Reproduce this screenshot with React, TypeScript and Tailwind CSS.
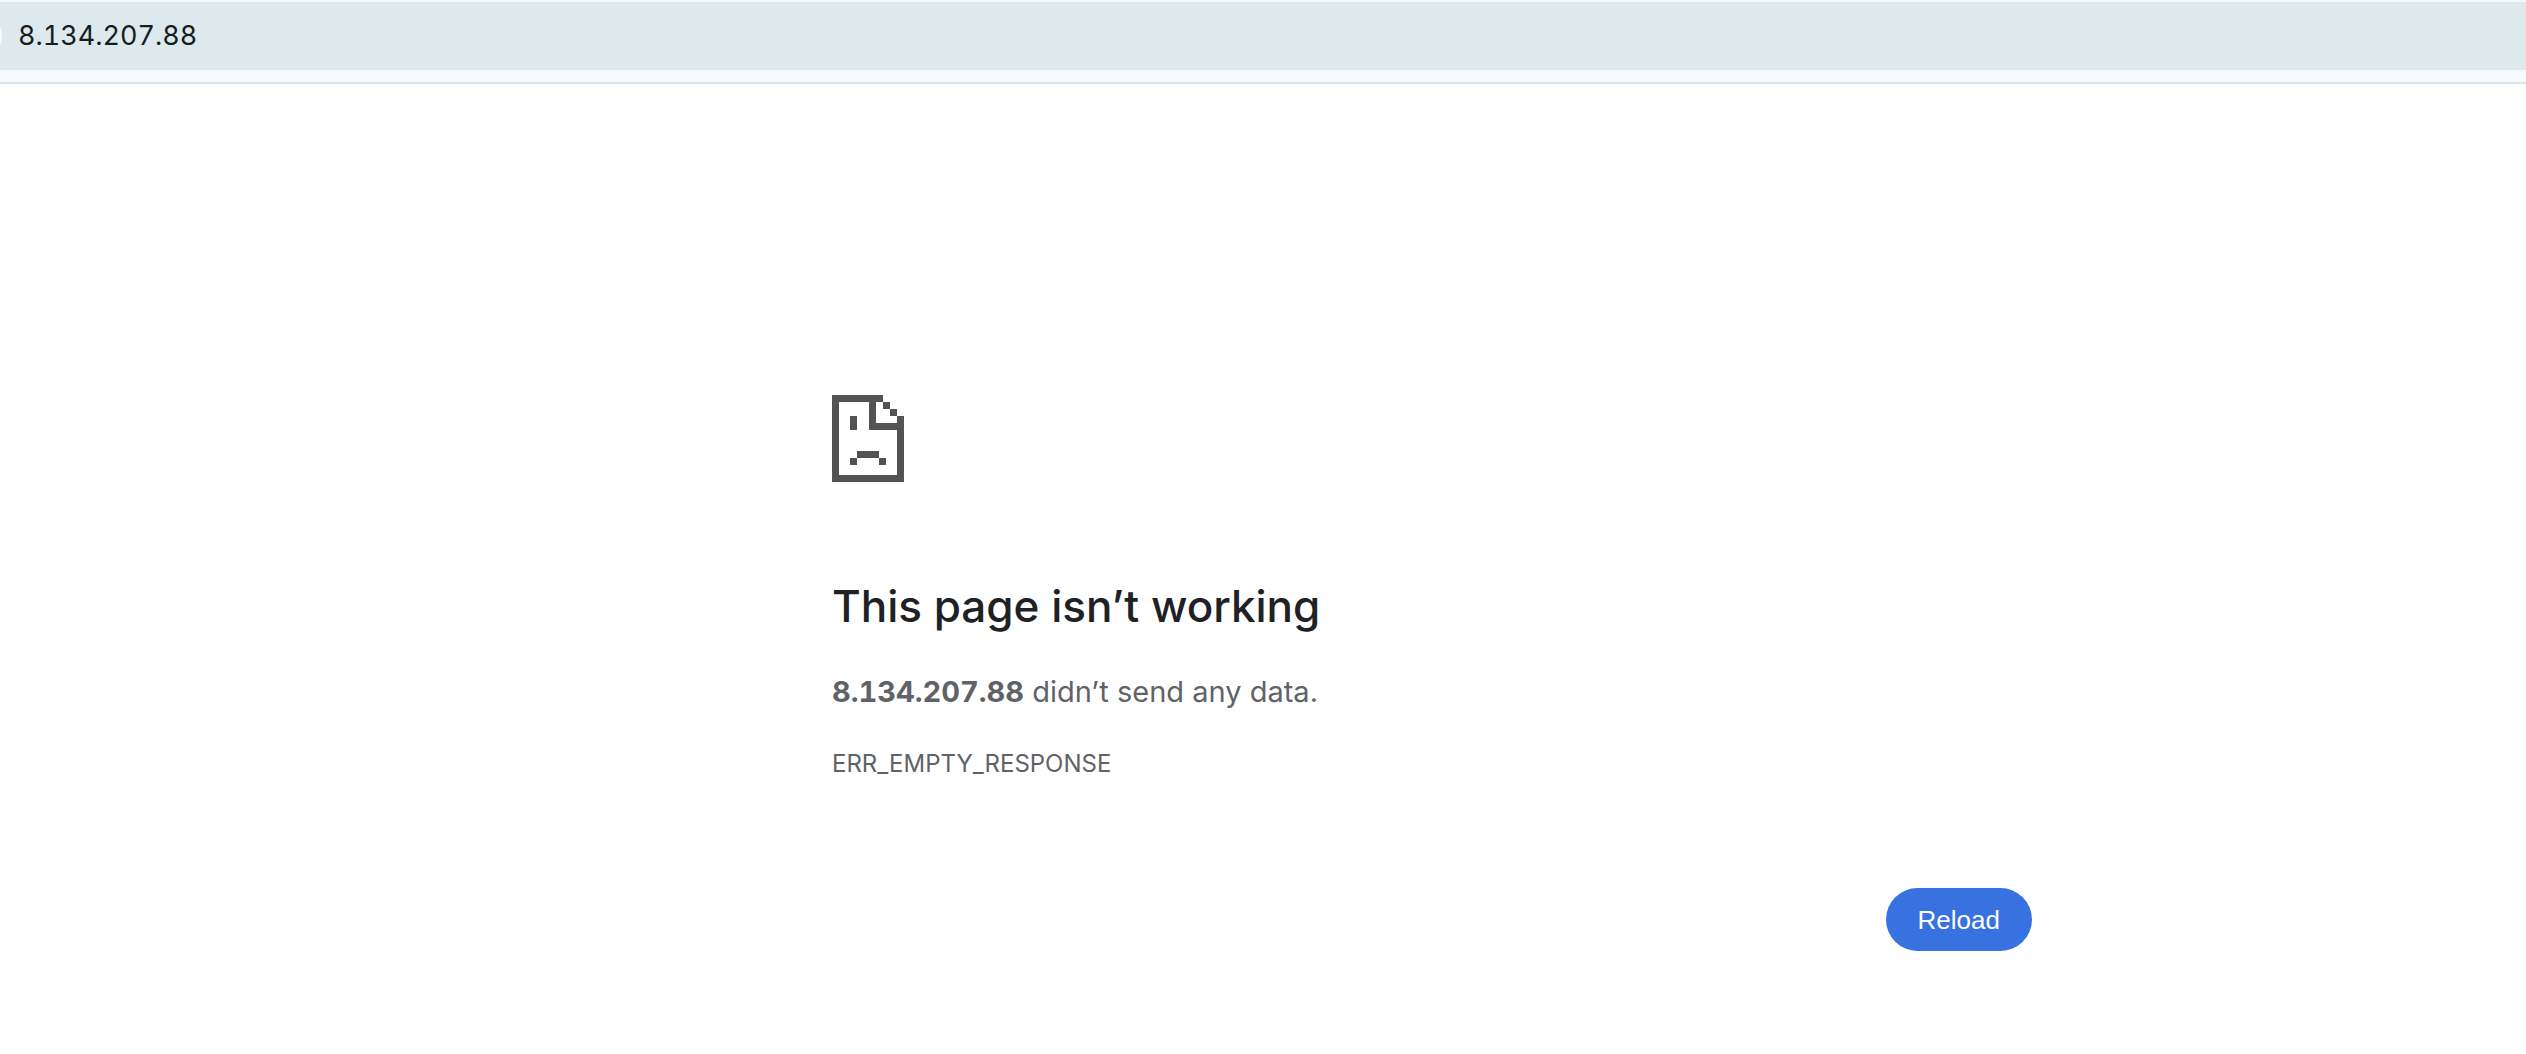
import React from "react";

function SadPageIcon() {
  return (
    <svg
      className="block h-[87px] w-[72px]"
      viewBox="0 0 72 87"
      fill="#535353"
      shapeRendering="crispEdges"
      aria-hidden="true"
    >
      <rect x="0" y="0" width="7" height="87" />
      <rect x="0" y="0" width="51" height="7" />
      <rect x="0" y="80" width="72" height="7" />
      <rect x="65" y="21" width="7" height="66" />
      <rect x="37" y="0" width="7" height="35" />
      <rect x="37" y="28" width="35" height="7" />
      <rect x="51" y="7" width="7" height="7" />
      <rect x="58" y="14" width="7" height="7" />
      <rect x="18" y="21" width="7" height="14" />
      <rect x="25" y="56" width="22" height="7" />
      <rect x="18" y="63" width="7" height="7" />
      <rect x="47" y="63" width="7" height="7" />
    </svg>
  );
}

function AddressBar() {
  return (
    <header className="border-b-2 border-[#dae5e9] bg-[#f6fafd] pt-0.5 pb-3">
      <div className="flex h-17 items-center gap-4 overflow-hidden bg-[#dee9ed]">
        <button
          type="button"
          aria-label="View site information"
          className="-ml-12 size-[50px] shrink-0 rounded-full bg-[#f6fafd]"
        />
        <input
          type="text"
          aria-label="Address"
          defaultValue="8.134.207.88"
          className="min-w-0 flex-1 bg-transparent text-[27px] leading-9 text-[#171d1e] tabular-nums outline-none"
        />
      </div>
    </header>
  );
}

export default function App() {
  return (
    <div className="min-h-screen bg-white font-['Inter','Liberation_Sans',sans-serif]">
      <AddressBar />
      <div className="pl-[338px]">
        <main className="mx-auto max-w-[1200px] pt-[311px] pb-24 text-[#5f6368]">
          <SadPageIcon />
          <h1 className="mt-24 text-[44px] leading-14 font-medium text-[#202124]">
            This page isn’t working
          </h1>
          <p className="mt-9 text-[29px] leading-11">
            <strong className="font-bold tabular-nums">8.134.207.88</strong> didn’t send any data.
          </p>
          <p className="mt-8 text-[24px] leading-9">ERR_EMPTY_RESPONSE</p>
          <div className="mt-[106px] flex justify-end">
            <button
              type="button"
              className="h-[63px] rounded-full bg-[#3871e0] px-8 font-['Liberation_Sans',Arial,sans-serif] text-[26px] leading-8 text-white"
            >
              Reload
            </button>
          </div>
        </main>
      </div>
    </div>
  );
}
